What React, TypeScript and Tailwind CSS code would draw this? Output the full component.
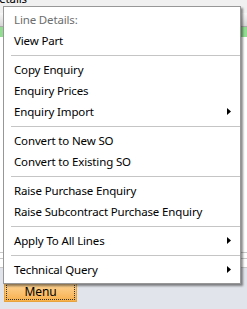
import React from "react";

type Entry =
  | { kind: "item"; label: string; header?: boolean; sub?: boolean }
  | { kind: "sep" };

const entries: Entry[] = [
  { kind: "item", label: "Line Details:", header: true },
  { kind: "item", label: "View Part" },
  { kind: "sep" },
  { kind: "item", label: "Copy Enquiry" },
  { kind: "item", label: "Enquiry Prices" },
  { kind: "item", label: "Enquiry Import", sub: true },
  { kind: "sep" },
  { kind: "item", label: "Convert to New SO" },
  { kind: "item", label: "Convert to Existing SO" },
  { kind: "sep" },
  { kind: "item", label: "Raise Purchase Enquiry" },
  { kind: "item", label: "Raise Subcontract Purchase Enquiry" },
  { kind: "sep" },
  { kind: "item", label: "Apply To All Lines", sub: true },
  { kind: "sep" },
  { kind: "item", label: "Technical Query", sub: true },
];

function Arrow() {
  return (
    <svg width="4" height="7" viewBox="0 0 4 7" className="block">
      <path d="M0 0 L4 3.5 L0 7 Z" fill="#000" />
    </svg>
  );
}

export default function App() {
  return (
    <div
      className="relative w-[247px] h-[309px] overflow-hidden bg-[#f0f0f0] text-[11.5px] tracking-[-0.15px]"
      style={{ fontFamily: '"Noto Sans", "Open Sans", sans-serif' }}
    >
      {/* background window */}
      <div className="flex flex-col h-full">
        <div className="h-[13px] relative leading-[12px] text-black">
          <span className="block -mt-[7px] -ml-[9px]">Details</span>
        </div>
        <div className="h-[14px] bg-gradient-to-b from-[#f7f7f7] to-[#d6d6d6] border-b border-[#a9a9a9]" />
        <div className="h-[10px] bg-[#93dd93]" />
        <div className="flex-1 bg-white flex flex-col justify-end">
          <div className="h-[6px] border-t border-[#c8c8c8]" />
          <div className="h-[9px] border-t border-[#c8c8c8]" />
        </div>
        <div className="h-[42px] bg-[#e1e4ea] border-t border-[#c8c8c8] pt-[13px] pl-[4px]">
          <div className="w-[73px] h-[21px] border border-[#e8a33c] bg-gradient-to-b from-[#fdd79a] to-[#f7b04a] p-[1px]">
            <div className="h-full border border-dotted border-[#333] flex items-center justify-center text-black leading-none text-[12px]">
              Menu
            </div>
          </div>
        </div>
      </div>

      {/* context menu overlay */}
      <div className="absolute left-[3px] top-[6px] w-[238px] bg-white border border-[#979797] pt-[2px] pb-[3px] shadow-[2px_2px_2px_rgba(0,0,0,0.45)]">
        {entries.map((e, i) =>
          e.kind === "sep" ? (
            <div key={i} className="h-[8px] flex items-center pl-[7px]">
              <div className="h-px flex-1 bg-[#c5c5c5]" />
            </div>
          ) : (
            <div
              key={i}
              className={`h-[21px] flex items-center justify-between pl-[10px] pr-[9px] whitespace-nowrap ${
                e.header ? "text-[#6d6d6d]" : "text-black"
              }`}
            >
              <span>{e.label}</span>
              {e.sub ? <Arrow /> : null}
            </div>
          )
        )}
      </div>
    </div>
  );
}
